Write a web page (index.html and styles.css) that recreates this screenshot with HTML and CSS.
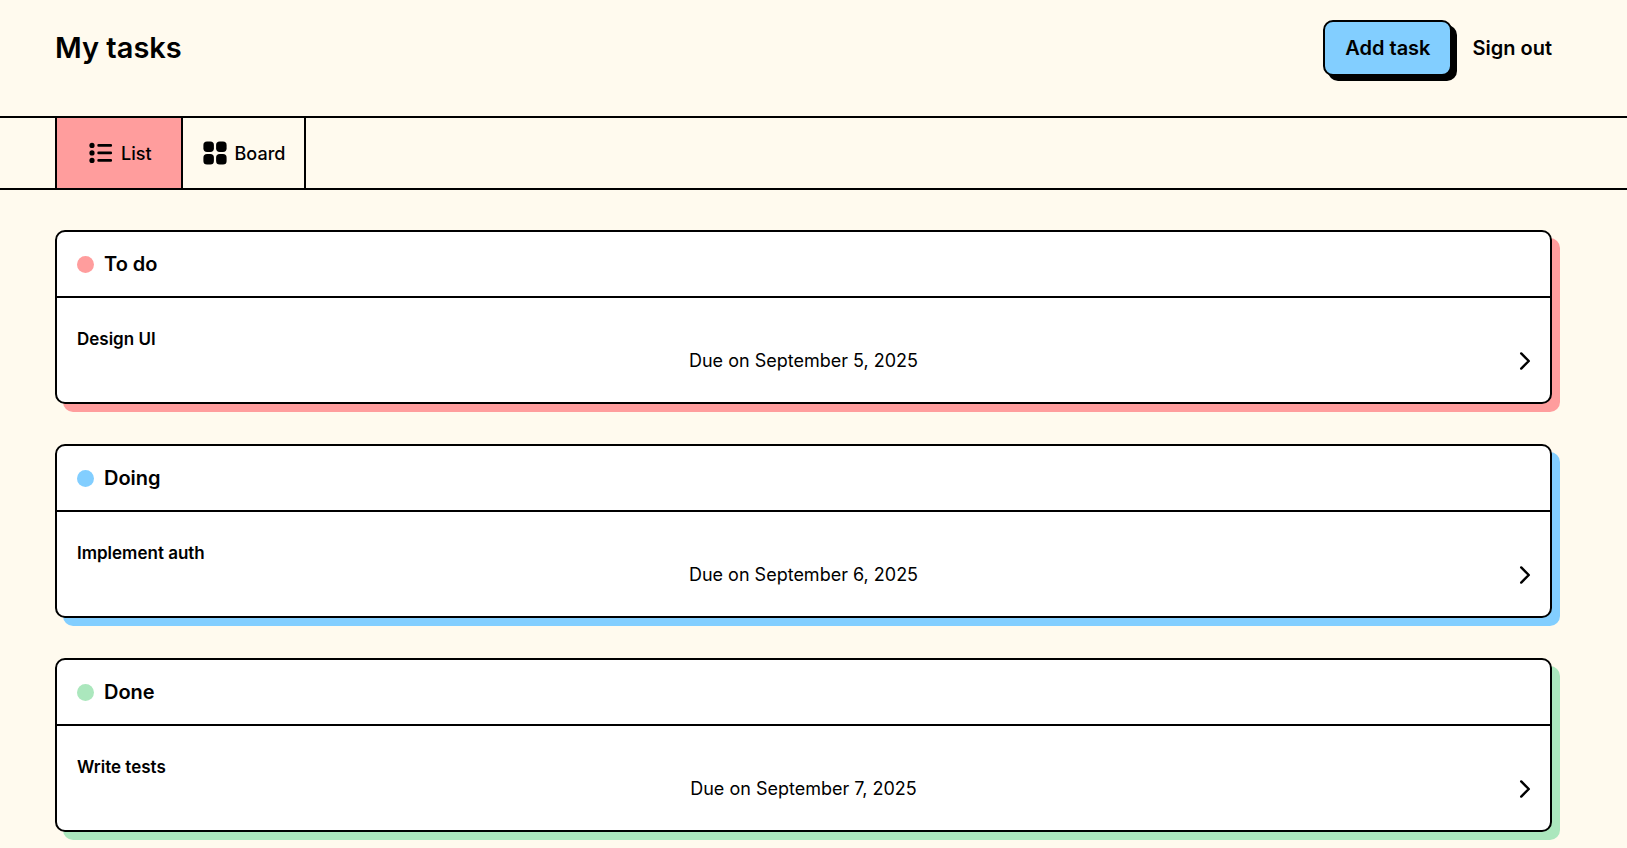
FILE: index.html
```html
<!DOCTYPE html>
<html lang="en">
<head>
<meta charset="utf-8">
<title>My tasks</title>
<link rel="stylesheet" href="styles.css">
</head>
<body>
<header class="header">
  <h1 class="title">My tasks</h1>
  <div class="actions">
    <button class="add" type="button">Add task</button>
    <button class="signout" type="button">Sign out</button>
  </div>
</header>
<nav class="tabs">
  <a class="tab tab-active" href="#list">
    <svg class="tab-icon" viewBox="0 0 26 26" aria-hidden="true">
      <g fill="currentColor"><circle cx="4" cy="5.4" r="2.6"/><circle cx="4" cy="12.9" r="2.6"/><circle cx="4" cy="20.4" r="2.6"/></g>
      <path d="M10.6 5.4h12.2M10.6 12.9h12.2M10.6 20.4h12.2" fill="none" stroke="currentColor" stroke-width="2.6" stroke-linecap="round"/>
    </svg>
    List
  </a>
  <a class="tab" href="#board">
    <svg class="tab-icon" viewBox="0 0 26 26" aria-hidden="true">
      <g fill="currentColor"><rect x="1.4" y="1.4" width="10.5" height="10.5" rx="3.6"/><rect x="14.1" y="1.4" width="10.5" height="10.5" rx="3.6"/><rect x="1.4" y="14.1" width="10.5" height="10.5" rx="3.6"/><rect x="14.1" y="14.1" width="10.5" height="10.5" rx="3.6"/></g>
    </svg>
    Board
  </a>
</nav>
<main class="lists">
  <section class="card todo">
    <h2 class="card-title"><span class="dot"></span>To do</h2>
    <a class="task" href="#design-ui">
      <h3 class="task-name">Design UI</h3>
      <span class="due">Due on September 5, 2025</span>
      <svg class="chevron" viewBox="0 0 12 20" aria-hidden="true"><path d="M3.2 2.4l7.6 7.6-7.6 7.6"/></svg>
    </a>
  </section>
  <section class="card doing">
    <h2 class="card-title"><span class="dot"></span>Doing</h2>
    <a class="task" href="#implement-auth">
      <h3 class="task-name">Implement auth</h3>
      <span class="due">Due on September 6, 2025</span>
      <svg class="chevron" viewBox="0 0 12 20" aria-hidden="true"><path d="M3.2 2.4l7.6 7.6-7.6 7.6"/></svg>
    </a>
  </section>
  <section class="card done">
    <h2 class="card-title"><span class="dot"></span>Done</h2>
    <a class="task" href="#write-tests">
      <h3 class="task-name">Write tests</h3>
      <span class="due">Due on September 7, 2025</span>
      <svg class="chevron" viewBox="0 0 12 20" aria-hidden="true"><path d="M3.2 2.4l7.6 7.6-7.6 7.6"/></svg>
    </a>
  </section>
</main>
</body>
</html>
```
FILE: styles.css
```css
* {
  box-sizing: border-box;
}

body {
  margin: 0;
  background: #fffaee;
  color: #000;
  font-family: Inter, sans-serif;
  font-size: 18px;
  line-height: 21px;
}

h1, h2, h3 {
  margin: 0;
}

a {
  color: inherit;
  text-decoration: none;
}

button {
  padding: 0;
  border: 0;
  background: none;
  color: inherit;
  font: inherit;
  font-size: 20px;
  font-weight: 600;
  line-height: 24px;
  cursor: pointer;
}

.header {
  display: flex;
  justify-content: space-between;
  align-items: flex-start;
  padding: 20px 75px 40px 55px;
}

.title {
  font-size: 29px;
  font-weight: 600;
  line-height: 56px;
}

.actions {
  display: flex;
  align-items: center;
  gap: 20px;
}

.add {
  padding: 14px 20px;
  border: 2px solid #000;
  border-radius: 10px;
  background: #82ceff;
  box-shadow: 5px 5px 0 #000;
}

.tabs {
  display: flex;
  padding-left: 55px;
  border-top: 2px solid #000;
  border-bottom: 2px solid #000;
}

.tab {
  display: flex;
  align-items: center;
  justify-content: center;
  gap: 7px;
  padding: 22px 19px;
  border-right: 2px solid #000;
  font-size: 18px;
  font-weight: 500;
}

.tab-active {
  border-left: 2px solid #000;
  padding: 22px 29px 22px 31px;
  background: #ff9d9d;
}

.tab-icon {
  width: 26px;
  height: 26px;
}

.lists {
  display: flex;
  flex-direction: column;
  gap: 40px;
  padding: 40px 75px 16px 55px;
}

.card {
  border: 2px solid #000;
  border-radius: 10px;
  background: #fff;
  box-shadow: 8px 8px 0 var(--accent);
}

.todo {
  --accent: #ff9d9d;
}

.doing {
  --accent: #82ceff;
}

.done {
  --accent: #abe7bd;
}

.card-title {
  display: flex;
  align-items: center;
  gap: 10px;
  padding: 20px;
  border-bottom: 2px solid #000;
  font-size: 20px;
  font-weight: 600;
  line-height: 24px;
}

.dot {
  width: 17px;
  height: 17px;
  border-radius: 50%;
  background: var(--accent);
}

.task {
  display: grid;
  grid-template-columns: 1fr auto 1fr;
  align-items: center;
  padding: 31px 20px;
}

.task-name {
  grid-column: 1 / -1;
  font-size: 17px;
  font-weight: 600;
}

.due {
  grid-column: 2;
}

.chevron {
  justify-self: end;
  width: 12px;
  height: 20px;
  overflow: visible;
  fill: none;
  stroke: currentColor;
  stroke-width: 2.4;
  stroke-linecap: round;
  stroke-linejoin: round;
}
```
